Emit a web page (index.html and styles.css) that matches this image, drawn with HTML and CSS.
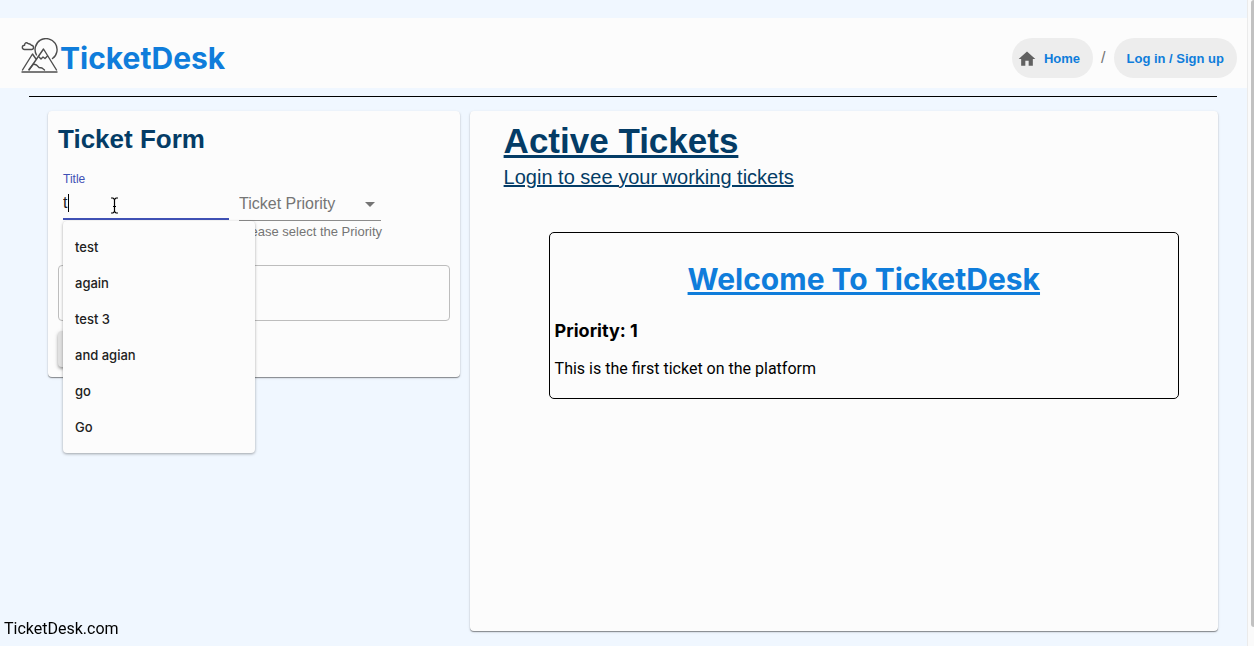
FILE: index.html
```html
<!DOCTYPE html>
<html lang="en">
<head>
<meta charset="utf-8">
<title>TicketDesk</title>
<link rel="stylesheet" href="styles.css">
</head>
<body>
<div class="window">
  <div class="page">
    <header class="header">
      <a class="brand" href="#">
        <svg class="brand-logo" viewBox="0 0 37 36" fill="none" stroke="#4d4d4d" stroke-width="1.4" stroke-linejoin="round" stroke-linecap="round" aria-hidden="true">
          <path d="M1 34H36"/>
          <path d="M1.500 32L11.500 16L15 21M8 32L22.500 11L35.500 32"/>
          <path d="M8 31.500L12.500 26L15.500 27L18 29.500L21 30L23.500 32"/>
          <path d="M17.500 18.500L20 21L22 19L24 20.500L26.500 18"/>
          <path d="M15.500 17A11 11 0 1 1 31.500 20.500"/>
          <path d="M3.500 11.500H10.500C13.200 11.500 13.200 7.600 10.500 7.300C9.500 5.500 7.500 6 7 5.500C5.500 4 3.500 5 3.600 7.300C.6 7.300 .6 11.500 3.500 11.500Z"/>
        </svg>
        <span class="brand-name">TicketDesk</span>
      </a>
      <nav class="nav" aria-label="Breadcrumb">
        <a class="chip chip-home" href="#">
          <svg class="chip-icon" viewBox="0 0 24 24" fill="#616161" aria-hidden="true"><path d="M10 20v-6h4v6h5v-8h3L12 3 2 12h3v8z"/></svg>
          <span>Home</span>
        </a>
        <span class="nav-separator">/</span>
        <a class="chip" href="#">Log in / Sign up</a>
      </nav>
    </header>
    <hr class="divider">
    <main class="content">
      <section class="card form-card">
        <h2 class="form-title">Ticket Form</h2>
        <form class="form">
          <div class="fields">
            <div class="field field-title">
              <label class="field-label" for="title">Title</label>
              <div class="input-wrap">
                <input class="field-input" id="title" type="text" value="t" autocomplete="off">
                <span class="caret"></span>
                <svg class="pointer" viewBox="0 0 9 17" fill="none" aria-hidden="true">
                  <path d="M1 1H3L4.500 2.500L6 1H8M4.500 2.500V14.500M1 16H3L4.500 14.500L6 16H8M3 9.500H6" stroke="#000" stroke-width="1.200"/>
                </svg>
              </div>
              <ul class="suggestions">
                <li><button class="suggestion" type="button">test</button></li>
                <li><button class="suggestion" type="button">again</button></li>
                <li><button class="suggestion" type="button">test 3</button></li>
                <li><button class="suggestion" type="button">and agian</button></li>
                <li><button class="suggestion" type="button">go</button></li>
                <li><button class="suggestion" type="button">Go</button></li>
              </ul>
            </div>
            <div class="field field-priority">
              <select class="field-select" id="priority" aria-label="Ticket Priority">
                <option>Ticket Priority</option>
              </select>
              <svg class="select-arrow" viewBox="0 0 10 5" fill="#757575" aria-hidden="true"><path d="M0 0L5 5L10 0z"/></svg>
              <label class="helper" for="priority">Please select the Priority</label>
            </div>
          </div>
          <textarea class="description" aria-label="Description"></textarea>
          <button class="submit" type="submit" aria-label="Submit"></button>
        </form>
      </section>
      <section class="card tickets-card">
        <h1 class="tickets-title">Active Tickets</h1>
        <a class="tickets-login" href="#">Login to see your working tickets</a>
        <article class="ticket">
          <h2 class="ticket-title">Welcome To TicketDesk</h2>
          <h3 class="ticket-priority">Priority: 1</h3>
          <p class="ticket-text">This is the first ticket on the platform</p>
        </article>
      </section>
    </main>
    <footer class="footer">TicketDesk.com</footer>
  </div>
  <div class="scrollbar"><div class="scrollbar-thumb"></div></div>
</div>
</body>
</html>
```
FILE: styles.css
```css
* {
  box-sizing: border-box;
}

body {
  margin: 0;
  background: #f0f7ff;
  color: #000;
  font-family: Roboto, sans-serif;
  font-size: 16px;
}

h1, h2, h3, p, ul {
  margin: 0;
  padding: 0;
}

.window {
  display: flex;
  min-height: 100vh;
}

.page {
  flex: 1;
  min-width: 0;
  padding-top: 18px;
}

.scrollbar {
  width: 7px;
  padding-left: 3px;
  background: #fafafa;
  border-left: 1px solid #ebebeb;
}

.scrollbar-thumb {
  height: 97vh;
  background: #c1c1c1;
  border-radius: 3px 0 0 3px;
}

.header {
  display: flex;
  align-items: center;
  justify-content: space-between;
  height: 70px;
  padding: 10px 10px 0 21px;
  background: #fcfcfc;
}

.brand {
  display: flex;
  align-items: flex-start;
  gap: 2px;
  color: #0f7ddb;
  text-decoration: none;
}

.brand-logo {
  width: 37px;
  height: 36px;
}

.brand-name {
  font: bold 30px/40px Inter, sans-serif;
}

.nav {
  display: flex;
  align-items: center;
  gap: 8px;
}

.chip {
  display: flex;
  align-items: center;
  gap: 7px;
  height: 40px;
  padding: 1px 13px 0;
  border-radius: 20px;
  background: #ededed;
  color: #0f7ddb;
  font: bold 13px/20px "Liberation Sans", sans-serif;
  text-decoration: none;
}

.chip-home {
  padding-left: 5px;
}

.chip-icon {
  width: 20px;
  height: 20px;
}

.nav-separator {
  color: #757575;
  font: 16px/24px "Liberation Sans", sans-serif;
}

.divider {
  height: 1px;
  margin: 8px 30px 14px 29px;
  border: 0;
  background: #000;
}

.content {
  display: grid;
  grid-template-columns: 11fr 20fr;
  gap: 10px;
  align-items: start;
  padding: 0 29px 0 48px;
}

.card {
  border-radius: 4px;
  background: #fcfcfc;
  box-shadow: 0 1px 1px rgba(0, 0, 0, .4), 0 1px 3px rgba(0, 0, 0, .12);
}

.form-card {
  padding: 10px;
  font-family: "Liberation Sans", sans-serif;
}

.form-title {
  color: #043c66;
  font-size: 26px;
  line-height: 36px;
}

.fields {
  display: flex;
  gap: 10px;
  padding: 15px 5px 0;
}

.field {
  position: relative;
}

.field-title {
  width: 166px;
}

.field-label {
  display: block;
  color: #3f51b5;
  font-size: 12px;
  line-height: 14px;
}

.input-wrap {
  position: relative;
}

.field-input {
  display: block;
  width: 100%;
  height: 34px;
  padding: 2px 0 0;
  border: 0;
  border-bottom: 2px solid #3f51b5;
  outline: 0;
  background: none;
  color: #212121;
  font: 16px/20px "Liberation Sans", sans-serif;
}

.caret {
  position: absolute;
  top: 8px;
  left: 5px;
  width: 1px;
  height: 18px;
  background: #000;
}

.pointer {
  position: absolute;
  top: 11px;
  left: 47px;
  width: 9px;
  height: 17px;
}

.suggestions {
  position: absolute;
  z-index: 1;
  top: 49px;
  left: 0;
  width: 192px;
  padding: 8px 0;
  border-radius: 4px;
  background: #fcfcfc;
  box-shadow: 0 1px 3px rgba(0, 0, 0, .35);
  list-style: none;
}

.suggestion {
  display: block;
  width: 100%;
  height: 36px;
  padding: 0 12px;
  border: 0;
  background: none;
  color: #212121;
  font: 500 13px/20px Inter, sans-serif;
  text-align: left;
}

.field-priority {
  padding-top: 16px;
}

.field-select {
  display: block;
  width: 142px;
  height: 33px;
  padding: 0;
  border: 0;
  border-bottom: 1px solid #8c8c8c;
  border-radius: 0;
  appearance: none;
  background: none;
  color: #757575;
  font: 16px/20px "Liberation Sans", sans-serif;
}

.select-arrow {
  position: absolute;
  top: 30px;
  right: 7px;
  width: 10px;
  height: 5px;
}

.helper {
  display: block;
  margin-top: 3px;
  color: #757575;
  font-size: 13px;
  line-height: 16px;
  text-align: right;
  white-space: nowrap;
}

.description {
  display: block;
  width: 100%;
  height: 56px;
  margin-top: 25px;
  border: 1px solid #bdbdbd;
  border-radius: 4px;
  background: none;
  resize: none;
}

.submit {
  display: block;
  width: 88px;
  height: 36px;
  margin-top: 10px;
  border: 0;
  border-radius: 4px;
  background: #e0e0e0;
  box-shadow: 0 2px 3px rgba(0, 0, 0, .3), 0 1px 5px rgba(0, 0, 0, .12);
}

.tickets-card {
  min-height: 520px;
  padding: 10px 34px;
  font-family: "Liberation Sans", sans-serif;
}

.tickets-title {
  color: #043c66;
  font-size: 35px;
  line-height: 40px;
  text-decoration: underline;
}

.tickets-login {
  display: block;
  color: #043c66;
  font-size: 20px;
  line-height: 32px;
}

.ticket {
  margin: 39px 5px 0 45px;
  padding: 23px 5px 17px;
  border: 1px solid #000;
  border-radius: 5px;
  font-family: Roboto, sans-serif;
}

.ticket-title {
  color: #0f7ddb;
  font: bold 30px/46px Inter, sans-serif;
  text-align: center;
  text-decoration: underline;
}

.ticket-priority {
  margin-top: 17px;
  font: bold 18px/24px Inter, sans-serif;
}

.ticket-text {
  margin-top: 14px;
  line-height: 24px;
}

.footer {
  position: fixed;
  bottom: 5px;
  left: 4px;
  line-height: 24px;
}
```
